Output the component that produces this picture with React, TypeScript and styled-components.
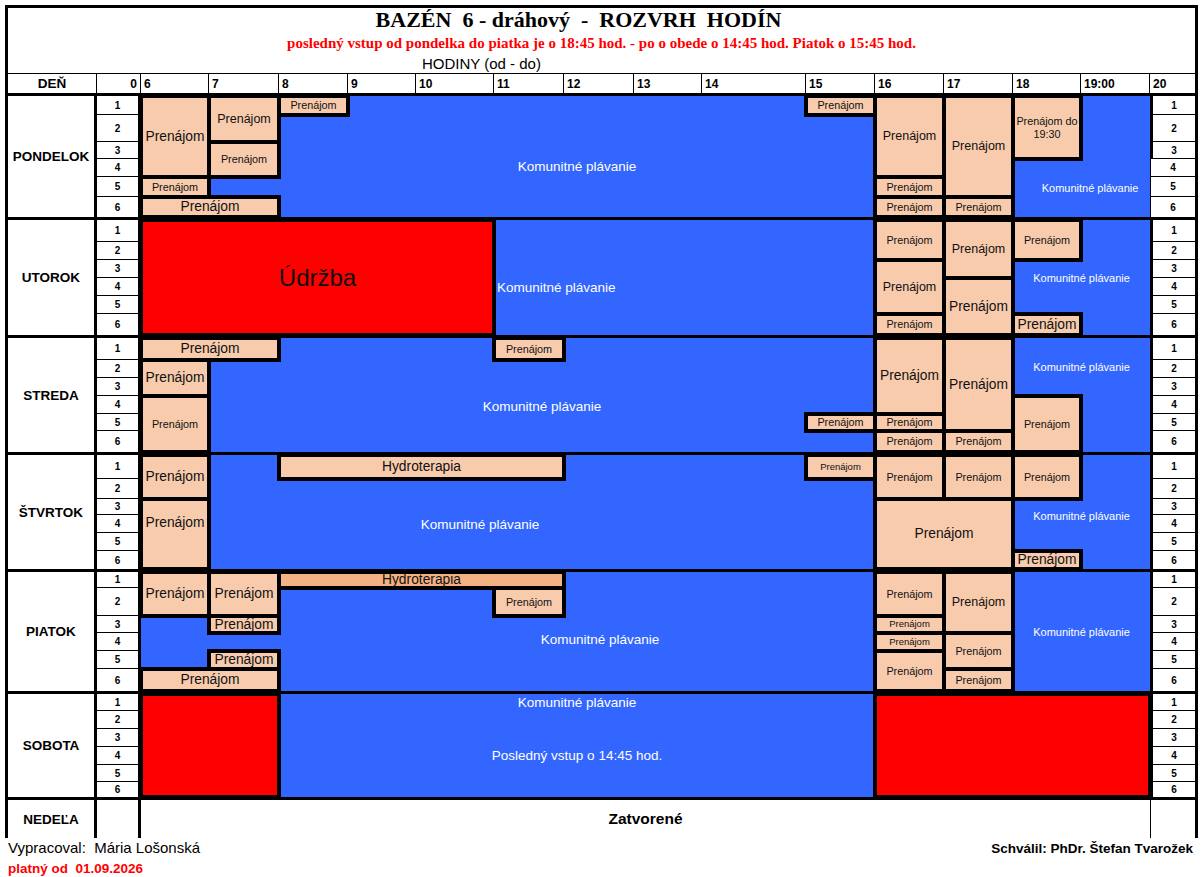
import * as React from 'react';
import styled, { createGlobalStyle } from 'styled-components';

const BLUE = '#3366ff';
const SALMON = '#f8cbad';
const HYDRO = '#f4b183';
const RED = '#ff0000';

// hour columns 6..19, widths taken from the sheet
const HOUR_W = [68, 70, 69, 68, 78, 70, 70, 68, 104, 69, 69, 69, 68, 69];
const HOUR_LABELS = ['6', '7', '8', '9', '10', '11', '12', '13', '14', '15', '16', '17', '18', '19:00'];
const COLS = `89px 44px ${HOUR_W.map((w) => `${w}px`).join(' ')} 45px`;

const XS = 9.5;
const S = 10.8;
const M = 12.5;
const L = 13.8;

type Kind = 'rent' | 'hydro' | 'red';

interface IBlock {
    h: [number, number];
    r: [number, number];
    size?: number;
    kind?: Kind;
    text?: string;
    pb?: number;
}

interface ILabel {
    h: [number, number];
    r: [number, number];
    size: number;
    text?: string;
    align?: 'start' | 'center';
    pl?: number;
    pr?: number;
}

interface IDay {
    name: string;
    rows: number[];
    blocks: IBlock[];
    labels: ILabel[];
    thinRight?: number[];
}

const KOM = 'Komunitné plávanie';

const DAYS: IDay[] = [
    {
        name: 'PONDELOK',
        rows: [19, 27, 17, 18, 20, 20],
        thinRight: [4, 5, 6],
        labels: [
            { h: [8, 16], r: [2, 6], size: 13.5 },
            { h: [18, 20], r: [4, 6], size: 11, pl: 17 },
        ],
        blocks: [
            { h: [6, 7], r: [1, 4], size: L },
            { h: [7, 8], r: [1, 2], size: M },
            { h: [7, 8], r: [3, 4], size: S },
            { h: [8, 9], r: [1, 1], size: S },
            { h: [6, 7], r: [5, 5], size: S },
            { h: [6, 8], r: [6, 6], size: L },
            { h: [15, 16], r: [1, 1], size: S },
            { h: [16, 17], r: [1, 4], size: M },
            { h: [16, 17], r: [5, 5], size: S },
            { h: [16, 17], r: [6, 6], size: S },
            { h: [17, 18], r: [1, 5], size: M },
            { h: [17, 18], r: [6, 6], size: S },
            { h: [18, 19], r: [1, 3], size: S, text: 'Prenájom do\n19:30' },
        ],
    },
    {
        name: 'UTOROK',
        rows: [22, 18, 18, 18, 18, 21],
        labels: [
            { h: [11, 16], r: [4, 4], size: 13.5, align: 'start', pl: 3 },
            { h: [18, 20], r: [3, 4], size: 11 },
        ],
        blocks: [
            { h: [6, 11], r: [1, 6], size: 24, kind: 'red', text: 'Údržba' },
            { h: [16, 17], r: [1, 2], size: S },
            { h: [16, 17], r: [3, 5], size: M },
            { h: [16, 17], r: [6, 6], size: S },
            { h: [17, 18], r: [1, 3], size: M },
            { h: [17, 18], r: [4, 6], size: L },
            { h: [18, 19], r: [1, 2], size: S },
            { h: [18, 19], r: [6, 6], size: L },
        ],
    },
    {
        name: 'STREDA',
        rows: [22, 18, 18, 18, 17, 21],
        labels: [
            { h: [7, 16], r: [2, 6], size: 13.5 },
            { h: [18, 20], r: [1, 3], size: 11 },
        ],
        blocks: [
            { h: [6, 8], r: [1, 1], size: L },
            { h: [11, 12], r: [1, 1], size: S },
            { h: [6, 7], r: [2, 3], size: L },
            { h: [6, 7], r: [4, 6], size: S },
            { h: [15, 16], r: [5, 5], size: S },
            { h: [16, 17], r: [1, 4], size: L },
            { h: [16, 17], r: [5, 5], size: S },
            { h: [16, 17], r: [6, 6], size: S },
            { h: [17, 18], r: [1, 5], size: L },
            { h: [17, 18], r: [6, 6], size: S },
            { h: [18, 19], r: [4, 6], size: S },
        ],
    },
    {
        name: 'ŠTVRTOK',
        rows: [24, 20, 16, 18, 18, 18],
        labels: [
            { h: [7, 15], r: [2, 6], size: 13.5, pr: 55 },
            { h: [18, 20], r: [3, 4], size: 11 },
        ],
        blocks: [
            { h: [6, 7], r: [1, 2], size: L },
            { h: [6, 7], r: [3, 6], size: L, pb: 22 },
            { h: [8, 12], r: [1, 1], size: L, text: 'Hydroterapia' },
            { h: [15, 16], r: [1, 1], size: XS },
            { h: [16, 17], r: [1, 2], size: S },
            { h: [17, 18], r: [1, 2], size: S },
            { h: [18, 19], r: [1, 2], size: S },
            { h: [16, 18], r: [3, 6], size: L },
            { h: [18, 19], r: [6, 6], size: L },
        ],
    },
    {
        name: 'PIATOK',
        rows: [16, 28, 17, 18, 18, 22],
        labels: [
            { h: [8, 16], r: [2, 6], size: 13.5, pl: 46 },
            { h: [18, 20], r: [1, 6], size: 11 },
        ],
        blocks: [
            { h: [6, 7], r: [1, 2], size: L },
            { h: [7, 8], r: [1, 2], size: L },
            { h: [8, 12], r: [1, 1], size: L, kind: 'hydro', text: 'Hydroterapia' },
            { h: [11, 12], r: [2, 2], size: S },
            { h: [7, 8], r: [3, 3], size: L },
            { h: [7, 8], r: [5, 5], size: L },
            { h: [6, 8], r: [6, 6], size: L },
            { h: [16, 17], r: [1, 2], size: S },
            { h: [16, 17], r: [3, 3], size: XS },
            { h: [16, 17], r: [4, 4], size: XS },
            { h: [16, 17], r: [5, 6], size: S },
            { h: [17, 18], r: [1, 3], size: M },
            { h: [17, 18], r: [4, 5], size: S },
            { h: [17, 18], r: [6, 6], size: S },
        ],
    },
    {
        name: 'SOBOTA',
        rows: [17, 18, 18, 18, 17, 15],
        labels: [
            { h: [8, 16], r: [1, 1], size: 13.5 },
            { h: [8, 16], r: [3, 5], size: 13.5, text: 'Posledný vstup o 14:45 hod.' },
        ],
        blocks: [
            { h: [6, 8], r: [1, 6], kind: 'red', text: '' },
            { h: [16, 20], r: [1, 6], kind: 'red', text: '' },
        ],
    },
];

const col = (h: [number, number]) => `${h[0] - 3} / ${h[1] - 3}`;
const row = (r: [number, number]) => `${r[0]} / ${r[1] + 1}`;

const GlobalStyle = createGlobalStyle`
    *, *::before, *::after {
        box-sizing: border-box;
    }
    body {
        margin: 0;
        background: #fff;
        font-family: 'Liberation Sans', Arial, sans-serif;
        color: #000;
    }
`;

const Page = styled.div`
    width: 1198px;
    padding: 5px 0 0 5px;
`;

const Sheet = styled.div`
    border: 3px solid #000;
    border-bottom: none;
`;

const TitleBox = styled.div`
    height: 65px;
    display: flex;
    flex-direction: column;
    align-items: center;
`;

const Title = styled.div`
    font-family: 'Liberation Serif', 'Times New Roman', serif;
    font-weight: bold;
    font-size: 22px;
    line-height: 24px;
    white-space: pre;
    padding-right: 46px;
`;

const Subtitle = styled.div`
    font-family: 'Liberation Serif', 'Times New Roman', serif;
    font-weight: bold;
    font-size: 15px;
    line-height: 22px;
    color: ${RED};
`;

const Hours = styled.div`
    font-size: 15px;
    line-height: 19px;
    padding-right: 240px;
`;

const HeadRow = styled.div`
    display: grid;
    grid-template-columns: ${COLS};
    height: 23px;
    border-top: 1px solid #000;
    border-bottom: 3px solid #000;
`;

const HeadCell = styled.div<{ $align: 'left' | 'center' | 'right' }>`
    display: flex;
    align-items: center;
    justify-content: ${(p) => (p.$align === 'left' ? 'flex-start' : p.$align === 'right' ? 'flex-end' : 'center')};
    padding: 0 3px;
    font-weight: bold;
    font-size: ${(p) => (p.$align === 'center' ? 13.5 : 12)}px;
    border-right: 1px solid #000;
    &:last-child {
        border-right: none;
    }
`;

const DayGrid = styled.div<{ $rows: number[] }>`
    display: grid;
    grid-template-columns: ${COLS};
    grid-template-rows: ${(p) => p.$rows.map((h) => `${h}px`).join(' ')};
    border-bottom: 3px solid #000;
`;

const DayName = styled.div`
    grid-column: 1;
    grid-row: 1 / -1;
    display: flex;
    align-items: center;
    justify-content: center;
    font-weight: bold;
    font-size: 13.5px;
    border-right: 3px solid #000;
    background: #fff;
`;

const LaneNum = styled.div<{ $side: 'left' | 'right'; $row: number; $last: boolean; $thin?: boolean }>`
    grid-column: ${(p) => (p.$side === 'left' ? 2 : 17)};
    grid-row: ${(p) => p.$row};
    display: flex;
    align-items: center;
    justify-content: center;
    font-weight: bold;
    font-size: 10px;
    background: #fff;
    border-bottom: ${(p) => (p.$last ? 'none' : '1px solid #000')};
    border-right: ${(p) => (p.$side === 'left' ? '3px solid #000' : 'none')};
    border-left: ${(p) => (p.$side === 'right' ? (p.$thin ? '1px solid #000' : '3px solid #000') : 'none')};
`;

const Pool = styled.div`
    grid-column: 3 / 17;
    grid-row: 1 / -1;
    background: ${BLUE};
`;

const PoolText = styled.div<{ $col: string; $row: string; $size: number; $align: 'start' | 'center'; $pl: number; $pr: number }>`
    grid-column: ${(p) => p.$col};
    grid-row: ${(p) => p.$row};
    display: flex;
    align-items: center;
    justify-content: ${(p) => (p.$align === 'start' ? 'flex-start' : 'center')};
    padding-left: ${(p) => p.$pl}px;
    padding-right: ${(p) => p.$pr}px;
    color: #fff;
    font-size: ${(p) => p.$size}px;
    white-space: nowrap;
    min-width: 0;
`;

const KIND_BG: Record<Kind, string> = { rent: SALMON, hydro: HYDRO, red: RED };

const Block = styled.div<{ $col: string; $row: string; $kind: Kind; $size: number; $pb: number }>`
    grid-column: ${(p) => p.$col};
    grid-row: ${(p) => p.$row};
    background: ${(p) => KIND_BG[p.$kind]};
    border: 2px solid #000;
    outline: 2px solid #000;
    display: flex;
    align-items: center;
    justify-content: center;
    padding-bottom: ${(p) => p.$pb}px;
    text-align: center;
    white-space: pre-line;
    font-size: ${(p) => p.$size}px;
    line-height: 1.15;
    color: #111;
    min-width: 0;
    min-height: 0;
`;

const SundayRow = styled.div`
    display: grid;
    grid-template-columns: ${COLS};
    height: 38px;
`;

const Empty = styled.div<{ $line: 'right' | 'left' }>`
    border-right: ${(p) => (p.$line === 'right' ? '3px solid #000' : 'none')};
    border-left: ${(p) => (p.$line === 'left' ? '1px solid #000' : 'none')};
`;

const Closed = styled.div`
    grid-column: 3 / 17;
    display: flex;
    align-items: center;
    justify-content: center;
    font-weight: bold;
    font-size: 15.5px;
`;

const Footer = styled.div`
    display: flex;
    justify-content: space-between;
    padding: 0 5px 0 3px;
    white-space: pre;
`;

const FootCol = styled.div`
    display: flex;
    flex-direction: column;
`;

const Author = styled.div`
    font-size: 15px;
    line-height: 20px;
`;

const Valid = styled.div`
    font-size: 13.5px;
    font-weight: bold;
    line-height: 21px;
    color: ${RED};
`;

const Approved = styled.div`
    font-size: 13.5px;
    font-weight: bold;
    line-height: 20px;
    padding-top: 1px;
`;

const Day = ({ day }: { day: IDay }) => (
    <DayGrid $rows={day.rows}>
        <DayName>{day.name}</DayName>
        {day.rows.map((_, i) => (
            <LaneNum key={`l${i}`} $side="left" $row={i + 1} $last={i === day.rows.length - 1}>
                {i + 1}
            </LaneNum>
        ))}
        <Pool />
        {day.labels.map((l, i) => (
            <PoolText
                key={`t${i}`}
                $col={col(l.h)}
                $row={row(l.r)}
                $size={l.size}
                $align={l.align ?? 'center'}
                $pl={l.pl ?? 0}
                $pr={l.pr ?? 0}
            >
                {l.text ?? KOM}
            </PoolText>
        ))}
        {day.blocks.map((b, i) => (
            <Block
                key={`b${i}`}
                $col={col(b.h)}
                $row={row(b.r)}
                $kind={b.kind ?? 'rent'}
                $size={b.size ?? S}
                $pb={b.pb ?? 0}
            >
                {b.text ?? 'Prenájom'}
            </Block>
        ))}
        {day.rows.map((_, i) => (
            <LaneNum
                key={`r${i}`}
                $side="right"
                $row={i + 1}
                $last={i === day.rows.length - 1}
                $thin={day.thinRight?.includes(i + 1)}
            >
                {i + 1}
            </LaneNum>
        ))}
    </DayGrid>
);

const App = () => (
    <Page>
        <GlobalStyle />
        <Sheet>
            <TitleBox>
                <Title>{'BAZÉN  6 - dráhový  -  ROZVRH  HODÍN'}</Title>
                <Subtitle>
                    posledný vstup od pondelka do piatka je o 18:45 hod. - po o obede o 14:45 hod. Piatok o 15:45 hod.
                </Subtitle>
                <Hours>HODINY (od - do)</Hours>
            </TitleBox>
            <HeadRow>
                <HeadCell $align="center">DEŇ</HeadCell>
                <HeadCell $align="right">0</HeadCell>
                {HOUR_LABELS.map((h) => (
                    <HeadCell key={h} $align="left">
                        {h}
                    </HeadCell>
                ))}
                <HeadCell $align="left">20</HeadCell>
            </HeadRow>
            {DAYS.map((d) => (
                <Day key={d.name} day={d} />
            ))}
            <SundayRow>
                <DayName>NEDEĽA</DayName>
                <Empty $line="right" />
                <Closed>Zatvorené</Closed>
                <Empty $line="left" />
            </SundayRow>
        </Sheet>
        <Footer>
            <FootCol>
                <Author>{'Vypracoval:  Mária Lošonská'}</Author>
                <Valid>{'platný od  01.09.2026'}</Valid>
            </FootCol>
            <Approved>Schválil: PhDr. Štefan Tvarožek</Approved>
        </Footer>
    </Page>
);

export default App;
